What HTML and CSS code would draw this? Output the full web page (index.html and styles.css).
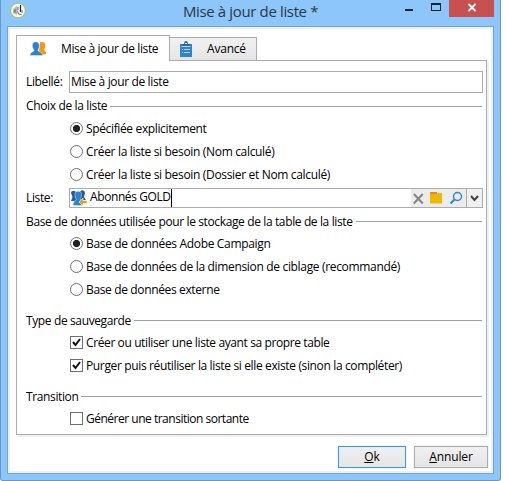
FILE: index.html
```html
<!DOCTYPE html>
<html lang="fr">
<head>
<meta charset="utf-8">
<title>Mise à jour de liste</title>
<link rel="stylesheet" href="styles.css">
</head>
<body>
<div class="window">
  <header class="titlebar">
    <svg class="app-icon" width="18" height="18" viewBox="0 0 18 18"><circle cx="9" cy="8.500" r="7.400" fill="#f4f6f0" stroke="#a3bf55" stroke-width="1"/><path d="M4 7l4-3 1 2-1 7-4-2z" fill="#b9bab8"/><path d="M5 8l2-1v4l-2-1z" fill="#888"/><path d="M11.500 3v7" stroke="#222" stroke-width="1.200"/><path d="M8.500 9l1 3 3 .5M9 5v3M13 8v3" stroke="#777" fill="none"/></svg>
    <h1 class="title">Mise à jour de liste *</h1>
    <div class="controls">
      <svg width="120" height="17" viewBox="0 0 120 17" shape-rendering="crispEdges"><path d="M31 9h8v2h-8z" fill="#222"/><path d="M57 3h10v8h-10zM58 5v5h8v-5z" fill="#222" fill-rule="evenodd"/><path d="M75 0h45v17h-45z" fill="#c75050"/><path d="M94.500 4l7 7M101.500 4l-7 7" stroke="#fff" stroke-width="1.800" shape-rendering="auto"/></svg>
    </div>
  </header>
  <main class="client">
    <nav class="tabs">
      <div class="tab active">
        <svg width="17" height="16" viewBox="0 0 17 16"><path d="M10 1.500c4-1.500 6 1 5 4.500l-1 3 2 2v2l-4 1-3-4z" fill="#f39a12"/><path d="M2.300 4.500c0-5 7-5 7 0 0 3-1 3.500-1.300 4.500 0 2.500 4.500 1.500 4.500 5.500H0c0-4 4-3 4-5.500-.5-1-1.700-1.500-1.700-4.500z" fill="#2c83cc" stroke="#fff" stroke-width=".4"/></svg>
        <span class="tab-main">Mise à jour de liste</span>
      </div>
      <div class="tab">
        <svg width="12" height="16" viewBox="0 0 12 16"><path d="M0 3h12v13H0z" fill="#2e83cd"/><path d="M2 5V3h2c0-4 4-4 4 0h2v2z" fill="#246ca9"/><path d="M1.500 5.500h9" stroke="#bcd9f0"/><path d="M5 2.500h2" stroke="#fff"/><path d="M2 8.500h1m1 0h6m-8 3h1m1 0h6" stroke="#b5d5ef"/></svg>
        <span>Avancé</span>
      </div>
    </nav>
    <section class="panel">
      <div class="field name"><label>Libellé:</label><div class="input"><span>Mise à jour de liste</span></div></div>
      <div class="legend l1"><span>Choix de la liste</span></div>
      <div class="options">
        <label class="opt"><i class="radio on"></i><span>Spécifiée explicitement</span></label>
        <label class="opt"><i class="radio"></i><span class="loose">Créer la liste si besoin (Nom calculé)</span></label>
        <label class="opt"><i class="radio"></i><span class="loose">Créer la liste si besoin (Dossier et Nom calculé)</span></label>
      </div>
      <div class="field list"><label>Liste:</label>
        <div class="combo">
          <svg width="17" height="17" viewBox="0 0 17 17"><path d="M0 3c0-3 5-3 5 0L4 7l3 4H0l1.500-4zM9 3c0-4 5-3 5 0l-1 4 2 3H8z" fill="#235f9c"/><path d="M4 4.500c0-4.500 6.500-4.500 6.500 0 0 3-1 3.500-1.500 4.500l2 2 1 4.500H2l1-4 2.500-2C5 8.500 4 7.500 4 4.500z" fill="#2c83cc" stroke="#cfe3f4" stroke-width=".5"/><path d="M8 12l4-4v2.500h4v3h-4V16z" fill="#f39a12" stroke="#fff" stroke-width=".6"/></svg>
          <span class="value">Abonnés GOLD</span>
          <div class="tools">
            <svg width="55" height="18" viewBox="0 0 55 18"><path d="M2.800 5l9 9.500m0-9.500l-9 9.500" stroke="#858585" stroke-width="2"/><path d="M19 3h7v2h-7z" fill="#e98b13"/><path d="M19 5h7l1-1h4v10.500H19z" fill="#efb800"/><circle cx="46.500" cy="7.500" r="4" fill="none" stroke="#2e86d2" stroke-width="1.500"/><path d="M43.500 10.500L39.500 14.500" stroke="#2e86d2" stroke-width="2"/></svg>
          </div>
          <div class="drop"><svg width="9" height="7" viewBox="0 0 9 7"><path d="M1 1l3.500 4L8 1" fill="none" stroke="#444" stroke-width="2"/></svg></div>
        </div>
      </div>
      <div class="legend l2"><span>Base de données utilisée pour le stockage de la table de la liste</span></div>
      <div class="options">
        <label class="opt"><i class="radio on"></i><span class="loose">Base de données Adobe Campaign</span></label>
        <label class="opt"><i class="radio"></i><span class="loose">Base de données de la dimension de ciblage (recommandé)</span></label>
        <label class="opt"><i class="radio"></i><span>Base de données externe</span></label>
      </div>
      <div class="legend l3"><span>Type de sauvegarde</span></div>
      <div class="options">
        <label class="opt"><i class="check"><svg width="11" height="11" viewBox="0 0 11 11"><path d="M2 5l2.500 3L9 2" fill="none" stroke="#111" stroke-width="2"/></svg></i><span class="tight">Créer ou utiliser une liste ayant sa propre table</span></label>
        <label class="opt"><i class="check"><svg width="11" height="11" viewBox="0 0 11 11"><path d="M2 5l2.500 3L9 2" fill="none" stroke="#111" stroke-width="2"/></svg></i><span>Purger puis réutiliser la liste si elle existe (sinon la compléter)</span></label>
      </div>
      <div class="legend l4"><span>Transition</span></div>
      <div class="options">
        <label class="opt"><i class="check"></i><span class="tighter">Générer une transition sortante</span></label>
      </div>
    </section>
    <footer class="buttons">
      <button class="btn ok"><span><u>O</u>k</span></button>
      <button class="btn cancel"><span><u>A</u>nnuler</span></button>
    </footer>
  </main>
</div>
</body>
</html>
```
FILE: styles.css
```css
* { box-sizing: border-box; }
body { margin: 0; background: #fff; font: 12px/16px "Open Sans", "Noto Sans", sans-serif; letter-spacing: -.36px; color: #000; overflow: hidden; }
svg { display: block; flex: none; }
span, label { white-space: nowrap; }
.loose { letter-spacing: -.33px; }
.tight { letter-spacing: -.39px; }
.tighter { letter-spacing: -.49px; }
.window { width: 501px; height: 481px; padding: 0 6px 6px; background: #8dc6fa; border: 1px solid #6699c8; border-top: 0; border-radius: 0 0 3px 3px; }
.titlebar { width: 487px; height: 26px; display: grid; grid-template-columns: 120px 1fr 120px; padding-left: 2px; align-items: start; }
.app-icon { margin-top: 2px; }
.title { margin: 0; padding-right: 2px; font-size: 15px; line-height: 22px; font-weight: 400; color: #2c3844; text-align: center; white-space: nowrap; }
.client { height: 448px; width: 487px; border: 1px solid #6fa5d6; background: #fff; box-shadow: inset 0 0 0 2px #f0f0f0; padding: 8px 5px 0 8px; display: flex; flex-direction: column; }
.tabs { display: flex; align-items: flex-end; height: 25px; }
.tab { display: flex; align-items: center; width: 87px; height: 23px; border: 1px solid #acacac; border-left: 0; border-bottom: 0; background: linear-gradient(#f1f1f1, #e5e5e5); padding-left: 10px; gap: 15px; letter-spacing: -.2px; }
.tab.active { width: 154px; height: 26px; margin-bottom: -1px; border-left: 1px solid #acacac; background: #fff; padding-left: 13px; gap: 14px; position: relative; letter-spacing: -.38px; }
.panel { width: 471px; height: 375px; border: 1px solid #acacac; box-shadow: 2px 2px 0 #f0f0f0; padding: 10px 3px 0 9px; }
.field { display: flex; align-items: center; }
.field label { width: 43px; }
.name { height: 22px; }
.input { width: 414px; height: 22px; border: 1px solid #acacac; padding: 2px 1px; }
.legend { display: flex; align-items: center; height: 16px; }
.legend::after { content: ""; flex: 1; height: 1px; background: #a0a0a0; margin: 1px 1px 0 3px; }
.l1 { margin: 5px 0 3px; }
.l2 { margin: 5px 0 3px; }
.l3 { margin: 11px 0 3px; }
.l4 { margin: 11px 0 3px; }
.l2 span, .l3 span, .l4 span { padding-top: 2px; letter-spacing: -.375px; }
.options { padding-left: 44px; }
.opt { display: flex; align-items: center; height: 23px; gap: 3px; }
.radio, .check { width: 13px; height: 13px; border: 1px solid #707070; flex: none; background: #fff; }
.radio { border-radius: 50%; }
.radio.on { background: radial-gradient(circle, #222 3.2px, #fff 4px); }
.list { height: 20px; margin-top: 2px; }
.combo { width: 414px; height: 20px; border: 1px solid #acacac; display: flex; align-items: center; padding-left: 1px; }
.value { margin-left: 2px; border-right: 1px solid #000; height: 18px; letter-spacing: -.4px; }
.tools { margin-left: auto; width: 55px; height: 18px; background: #ececec; }
.drop { width: 17px; height: 20px; border: 1px solid #acacac; background: #f0f0f0; display: grid; place-items: center; margin-right: -1px; }
.buttons { display: flex; justify-content: flex-end; gap: 8px; margin-top: 11px; }
.btn { height: 22px; padding: 0; border: 1px solid #acacac; background: linear-gradient(#f0f0f0, #e5e5e5); font: inherit; letter-spacing: -.15px; color: #000; box-shadow: 0 0 0 1px #f5f5f5; }
.ok { width: 68px; border-color: #3399ff; }
.cancel { width: 74px; }
```
